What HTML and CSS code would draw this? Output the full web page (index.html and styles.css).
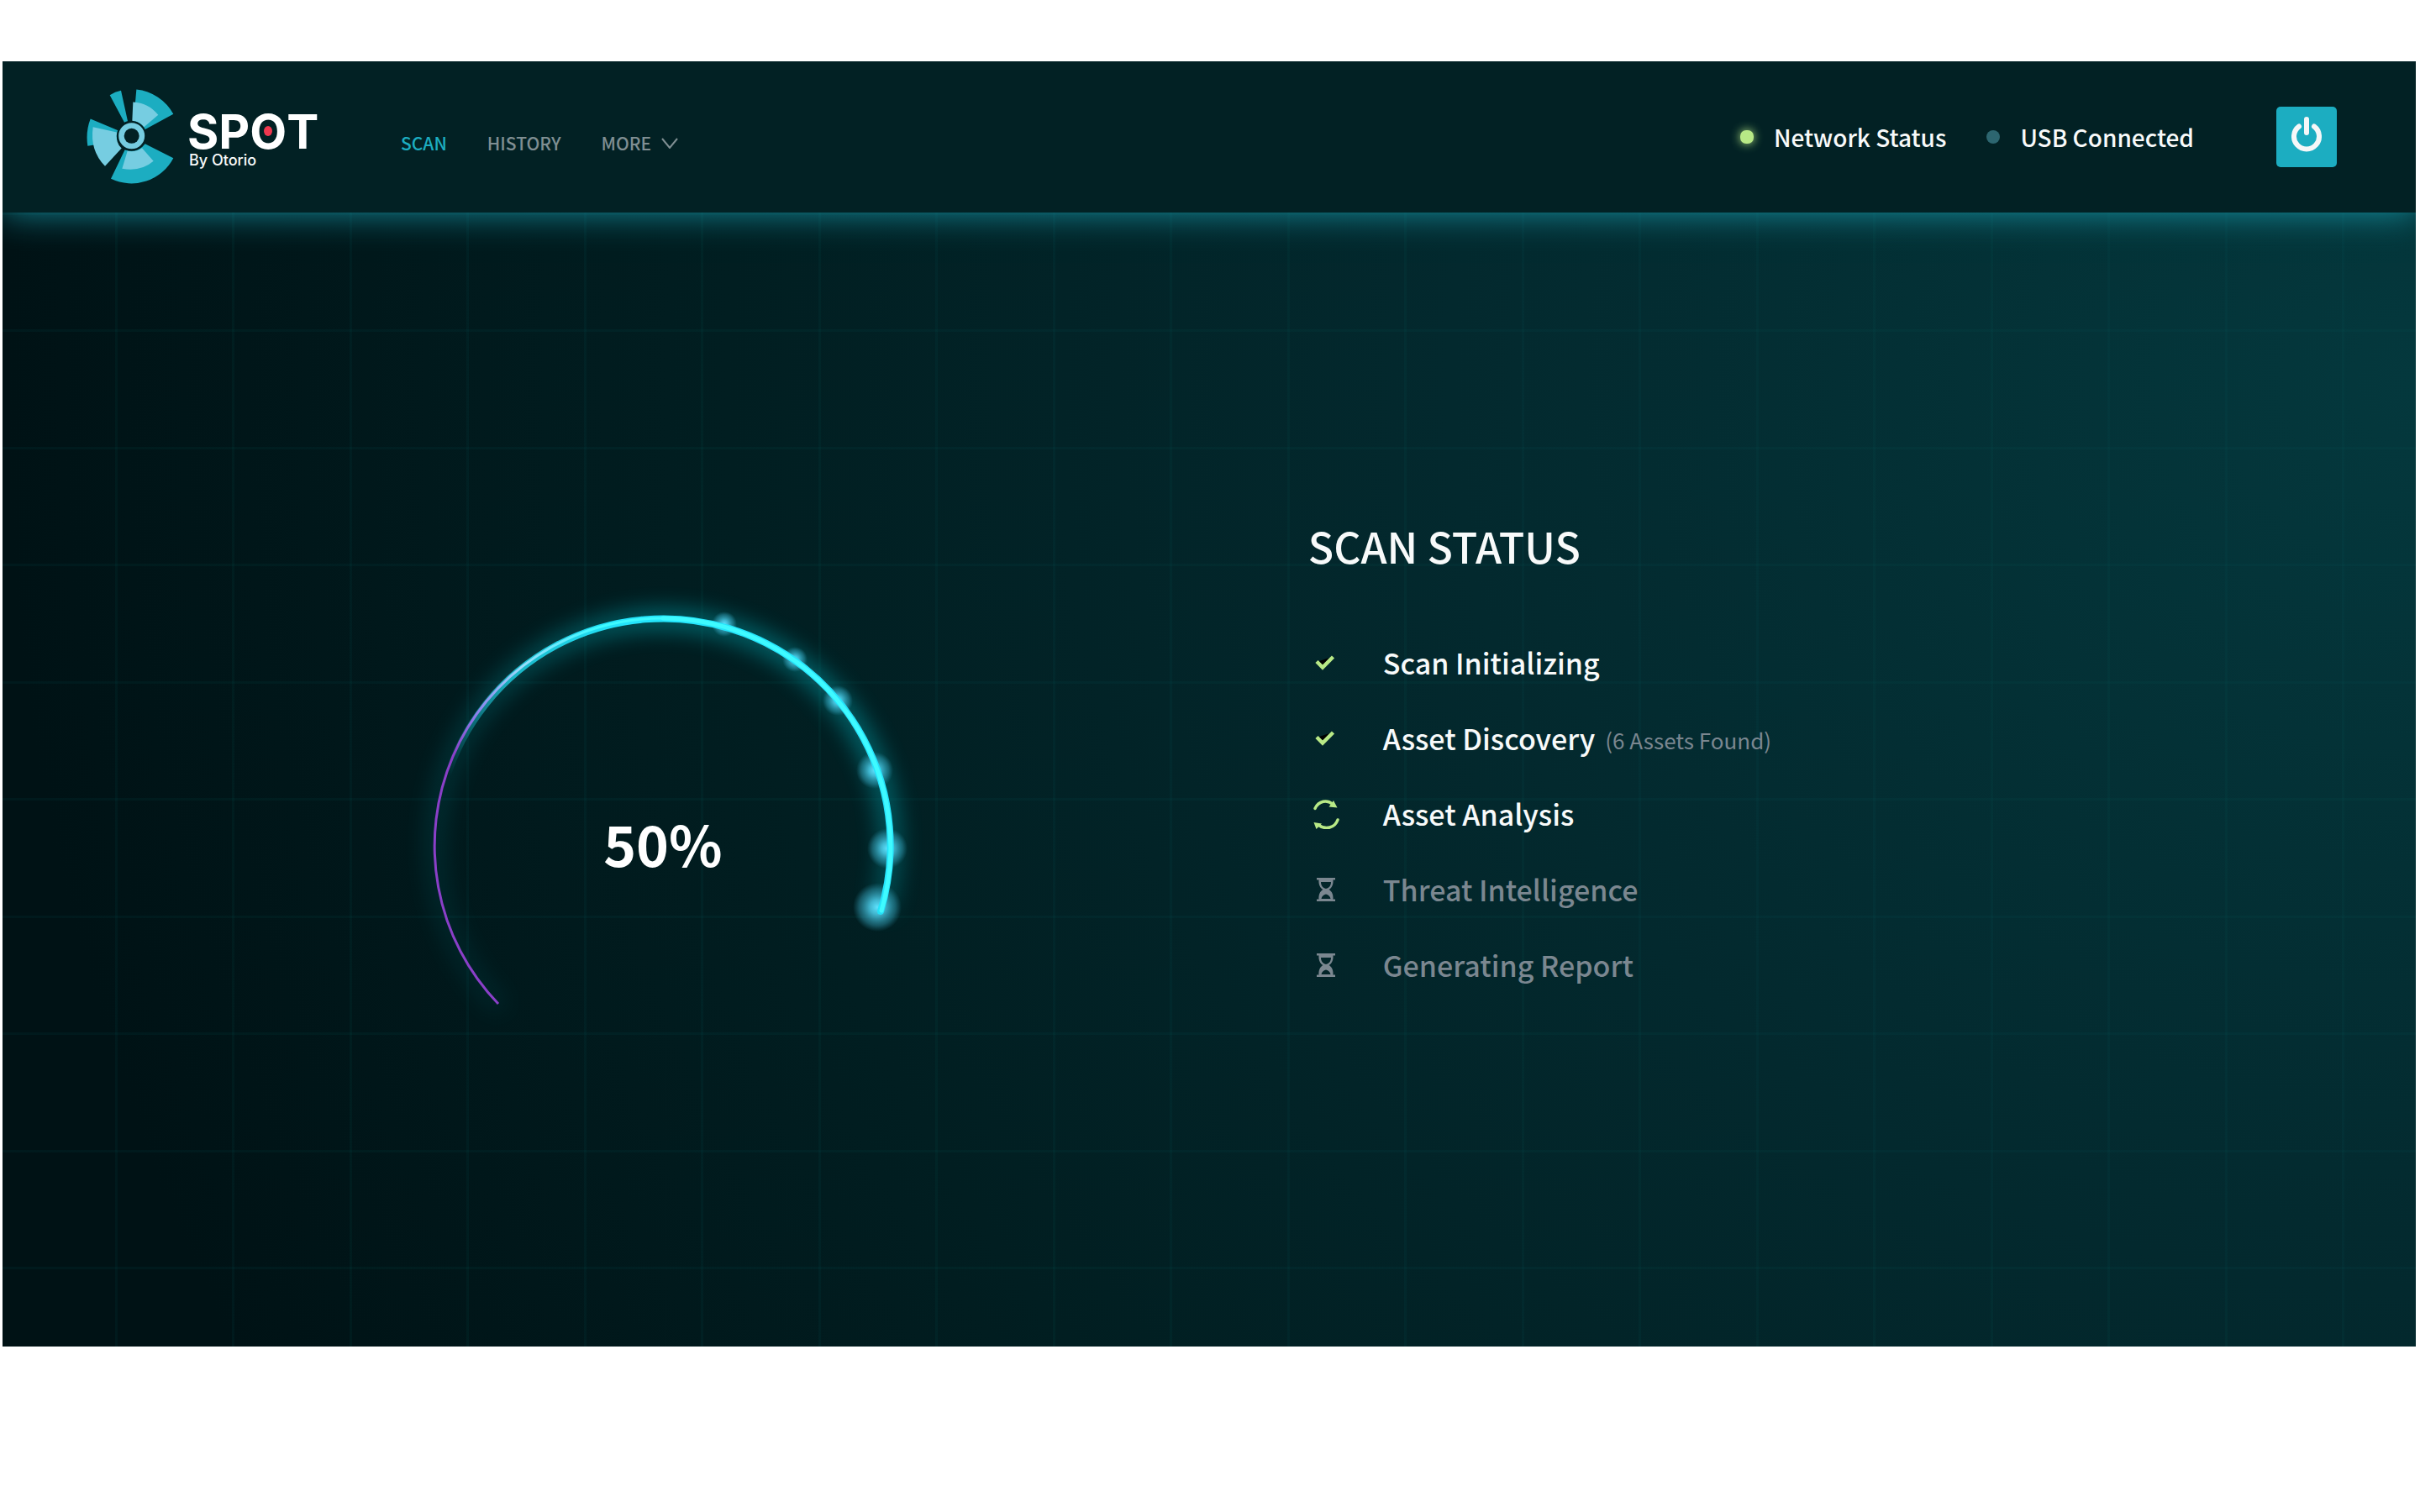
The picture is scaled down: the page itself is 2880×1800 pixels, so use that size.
FILE: index.html
```html
<!DOCTYPE html>
<html lang="en">
<head>
<meta charset="utf-8">
<meta name="viewport" content="width=device-width, initial-scale=1">
<title>SPOT by Otorio</title>
<link rel="stylesheet" href="styles.css">
</head>
<body>
<div class="app">
  <header class="topbar">
    <a class="brand" href="#">
      <svg class="brand-mark" viewBox="68 76 312 338" aria-hidden="true">
        <g fill="#1cadc1">
          <path d="M151 97Q170 85 191 81L215 190Q209 191 203 195Z"/>
          <path d="M246 77A170 170 0 0 1 378 165L276 220Q262 200 236 192Z"/>
          <path d="M82 182L182 224Q173 243 178 262L72 279Q64 228 82 182Z"/>
          <path d="M277 271L378 322A169 169 0 0 1 155 396L205 292Q250 305 277 271Z"/>
        </g>
        <g fill="#76cde1">
          <path d="M234 122Q288 124 324 168L273 211Q257 191 231 189Z"/>
          <path d="M91 211L176 230Q170 265 193 287L134 351Q79 294 91 211Z"/>
          <path d="M266 286L307 333Q262 372 195 360L214 297Q244 302 266 286Z"/>
        </g>
        <circle cx="229" cy="243" r="50" fill="#76cde1" stroke="#022124" stroke-width="7"/>
        <circle cx="229" cy="243" r="27" fill="#022124"/>
      </svg>
      <span class="brand-text">
        <span class="brand-name">SP<span class="brand-o">O</span>T</span>
        <span class="brand-by">By Otorio</span>
      </span>
    </a>
    <nav class="nav">
      <a class="nav-link active" href="#">SCAN</a>
      <a class="nav-link" href="#">HISTORY</a>
      <button class="nav-link" type="button">MORE
        <svg class="chevron" viewBox="0 0 20 14" aria-hidden="true"><path d="M1 2L10 13L19 2" fill="none" stroke="currentColor" stroke-width="2"/></svg>
      </button>
    </nav>
    <div class="states">
      <span class="state"><i class="dot on"></i>Network Status</span>
      <span class="state"><i class="dot"></i>USB Connected</span>
    </div>
    <button class="power" type="button" aria-label="Power">
      <svg viewBox="0 0 36 42" aria-hidden="true"><g fill="none" stroke="#f5f7f8" stroke-width="6" stroke-linecap="round"><path d="M18 3V19"/><path d="M9 11.500A15 15 0 1 0 27 11.500"/></g></svg>
    </button>
  </header>

  <main class="scan">
    <section class="gauge" aria-label="Scan progress">
      <svg class="gauge-ring" viewBox="-280 -280 560 560" aria-hidden="true">
        <defs>
          <linearGradient id="thick" gradientUnits="userSpaceOnUse" x1="-250" y1="-80" x2="-60" y2="-270">
            <stop offset="0" stop-color="#1fdcf0" stop-opacity="0"/>
            <stop offset=".5" stop-color="#1fdcf0" stop-opacity=".75"/>
            <stop offset="1" stop-color="#24e4fb"/>
          </linearGradient>
          <linearGradient id="thin" gradientUnits="userSpaceOnUse" x1="-250" y1="-110" x2="-20" y2="-272">
            <stop offset="0" stop-color="#8a3fc8"/>
            <stop offset=".2" stop-color="#8f86f0"/>
            <stop offset=".45" stop-color="#9bdcfb"/>
            <stop offset=".8" stop-color="#3ffaff"/>
            <stop offset="1" stop-color="#3ffaff"/>
          </linearGradient>
          <linearGradient id="halo" gradientUnits="userSpaceOnUse" x1="-270" y1="120" x2="0" y2="-270">
            <stop offset="0" stop-color="#10a5b0" stop-opacity=".2"/>
            <stop offset=".5" stop-color="#10a5b0" stop-opacity=".4"/>
            <stop offset="1" stop-color="#10b5c0" stop-opacity="1"/>
          </linearGradient>
          <radialGradient id="spark">
            <stop offset="0" stop-color="#5fe3ff"/>
            <stop offset=".3" stop-color="#4ccdea" stop-opacity=".85"/>
            <stop offset=".75" stop-color="#38a9c4" stop-opacity=".4"/>
            <stop offset="1" stop-color="#2f93ac" stop-opacity="0"/>
          </radialGradient>
          <filter id="soft" filterUnits="userSpaceOnUse" x="-340" y="-340" width="680" height="680"><feGaussianBlur stdDeviation="14"/></filter>
        </defs>
        <path d="M-192 192A271 271 0 1 1 260 76" fill="none" stroke="url(#halo)" stroke-width="18" opacity=".65" filter="url(#soft)"/>
        <g fill="url(#spark)">
          <circle cx="73" cy="-265" r="15"/>
          <circle cx="157" cy="-223" r="15"/>
          <circle cx="208" cy="-174" r="18"/>
          <circle cx="252" cy="-91" r="22"/>
          <circle cx="267" cy="2" r="24"/>
          <circle cx="255" cy="72" r="29"/>
        </g>
        <path d="M-258 -80A270 270 0 0 1 259 77" fill="none" stroke="url(#thick)" stroke-width="8" stroke-linecap="round"/>
        <path d="M-196 187A271 271 0 0 1 0 -272" fill="none" stroke="url(#thin)" stroke-width="3"/>
        <path d="M0 -272A272 272 0 0 1 260 76" fill="none" stroke="#3ffaff" stroke-width="5" stroke-linecap="round"/>
      </svg>
      <strong class="gauge-value">50%</strong>
    </section>

    <section class="status">
      <h1 class="status-title">SCAN STATUS</h1>
      <ul class="steps">
        <li class="step">
          <svg class="step-icon" viewBox="0 0 34 36" aria-hidden="true"><path d="M9 16L21 12L13 22Z" fill="#000"/><path d="M6 16.500L13 23.500L25.500 11" fill="none" stroke="#b8e986" stroke-width="4.500"/></svg>
          <span>Scan Initializing</span>
        </li>
        <li class="step">
          <svg class="step-icon" viewBox="0 0 34 36" aria-hidden="true"><path d="M9 16L21 12L13 22Z" fill="#000"/><path d="M6 16.500L13 23.500L25.500 11" fill="none" stroke="#b8e986" stroke-width="4.500"/></svg>
          <span>Asset Discovery</span><small class="note">(6 Assets Found)</small>
        </li>
        <li class="step">
          <svg class="step-icon" viewBox="0 0 34 36" aria-hidden="true"><g fill="none" stroke="#b8e986" stroke-width="3.500" stroke-linecap="round"><path d="M4 11.500C8.500 2 18.500 1 24.500 6"/><path d="M31 25C27.500 35 16.500 37 8.500 31.500"/></g><path d="M26 2L30.500 10.500L20.500 9.500ZM2.500 28L12 29.500L5.500 36Z" fill="#b8e986"/></svg>
          <span>Asset Analysis</span>
        </li>
        <li class="step waiting">
          <svg class="step-icon" viewBox="0 0 34 36" aria-hidden="true"><path d="M6 4H28V6.500H6ZM6 29.500H28V32H6Z" fill="#7b8790"/><path fill="#7b8790" fill-rule="evenodd" d="M8.500 6H25.500C26 12 24 16 20.500 18C24 20 26 24 25.500 30H8.500C8 24 10 20 13.500 18C10 16 8 12 8.500 6ZM11 9C11 13 13 16 17 17C21 16 23 13 23 9ZM11.500 29H22.500C22 26 20 24.500 17 23.500C14 24.500 12 26 11.500 29Z"/></svg>
          <span>Threat Intelligence</span>
        </li>
        <li class="step waiting">
          <svg class="step-icon" viewBox="0 0 34 36" aria-hidden="true"><path d="M6 4H28V6.500H6ZM6 29.500H28V32H6Z" fill="#7b8790"/><path fill="#7b8790" fill-rule="evenodd" d="M8.500 6H25.500C26 12 24 16 20.500 18C24 20 26 24 25.500 30H8.500C8 24 10 20 13.500 18C10 16 8 12 8.500 6ZM11 9C11 13 13 16 17 17C21 16 23 13 23 9ZM11.500 29H22.500C22 26 20 24.500 17 23.500C14 24.500 12 26 11.500 29Z"/></svg>
          <span>Generating Report</span>
        </li>
      </ul>
    </section>
  </main>
</div>
</body>
</html>
```
FILE: styles.css
```css
* {
  box-sizing: border-box;
}

body {
  margin: 0;
  padding: 73px 5px 0 3px;
  background: #fff;
  color: #f8fafa;
  font-family: "Noto Sans CJK SC", "Noto Sans", sans-serif;
  font-weight: 500;
}

a {
  color: inherit;
  text-decoration: none;
}

button {
  padding: 0;
  border: 0;
  background: none;
  font: inherit;
}

.app {
  display: flex;
  flex-direction: column;
  min-height: 85vh;
  overflow: hidden;
}

/* Top bar */
.topbar {
  position: relative;
  z-index: 1;
  display: flex;
  align-items: center;
  height: 180px;
  padding: 0 94px 0 100px;
  background: #022124;
  box-shadow: 0 0 40px rgba(28, 173, 193, 0.75);
}

.brand {
  display: flex;
  align-items: center;
  gap: 16px;
  width: 374px;
  padding-bottom: 2px;
}

.brand-mark {
  width: 104px;
  height: 113px;
}

.brand-text {
  display: flex;
  flex-direction: column;
  padding-top: 9px;
  font-family: Inter, sans-serif;
}

.brand-name {
  font-size: 57px;
  font-weight: 700;
  line-height: 48px;
  color: #fff;
}

.brand-o {
  position: relative;
}

.brand-o::after {
  content: "";
  position: absolute;
  top: 50%;
  left: 50%;
  width: 10px;
  height: 12px;
  margin: -6px 0 0 -5px;
  border-radius: 50%;
  background: #f0384f;
}

.brand-by {
  padding-left: 2px;
  font-size: 18px;
  line-height: 20px;
}

.nav {
  display: flex;
  gap: 48px;
  padding-top: 14px;
  font-size: 21px;
  line-height: 32px;
}

.nav-link {
  display: flex;
  align-items: center;
  gap: 12px;
  color: #7f8e92;
  cursor: pointer;
}

.nav-link.active {
  color: #1cadc1;
}

.chevron {
  width: 20px;
  height: 14px;
}

.states {
  display: flex;
  gap: 48px;
  margin-left: auto;
  font-size: 28px;
  line-height: 40px;
}

.state {
  display: flex;
  align-items: center;
  gap: 24px;
}

.dot {
  width: 16px;
  height: 16px;
  border-radius: 50%;
  background: #2d6670;
}

.dot.on {
  border-radius: 7px;
  background: #b8e986;
  box-shadow: 0 0 12px #b8e986;
}

.power {
  display: grid;
  place-items: center;
  width: 72px;
  height: 72px;
  margin-left: 98px;
  padding-bottom: 6px;
  border-radius: 5px;
  background: #1cadc1;
  cursor: pointer;
}

.power svg {
  width: 36px;
  height: 42px;
}

/* Scan view */
.scan {
  flex: 1;
  display: grid;
  grid-template-columns: 54.1% 1fr;
  align-items: start;
  background:
    linear-gradient(90deg, transparent 134px, rgba(0, 90, 90, 0.11) 134px 137px, transparent 137px 273px, rgba(0, 90, 90, 0.11) 273px 276px, transparent 276px) 0 0 / 279px 100%,
    linear-gradient(180deg, rgba(0, 90, 90, 0.11) 3px, transparent 3px 139px, rgba(0, 90, 90, 0.11) 139px 142px, transparent 142px) 0 0 / 100% 279px,
    radial-gradient(ellipse 100% 200% at 100% 15%, #04383d 0%, #03292e 40%, #011e21 70%, #001215 100%);
}

.gauge {
  display: grid;
  place-items: center;
  padding: 475px 0 0 18px;
}

.gauge-ring,
.gauge-value {
  grid-area: 1 / 1;
}

.gauge-ring {
  width: 560px;
  height: 560px;
  overflow: visible;
}

.gauge-value {
  padding-bottom: 10px;
  font-size: 66px;
  font-weight: 700;
  line-height: 80px;
  color: #fff;
}

.status {
  padding-top: 360px;
}

.status-title {
  margin: 0 0 58px;
  font-size: 50px;
  font-weight: 500;
  line-height: 72px;
}

.steps {
  margin: 0;
  padding: 0;
  list-style: none;
  font-size: 34px;
}

.step {
  display: flex;
  align-items: center;
  height: 90px;
}

.step.waiting {
  color: #7b8790;
}

.step-icon {
  width: 34px;
  height: 36px;
  margin: 2px 51px 0 4px;
}

.note {
  margin: 4px 0 0 12px;
  font-size: 26px;
  font-weight: 400;
  color: #7b8790;
}
```
